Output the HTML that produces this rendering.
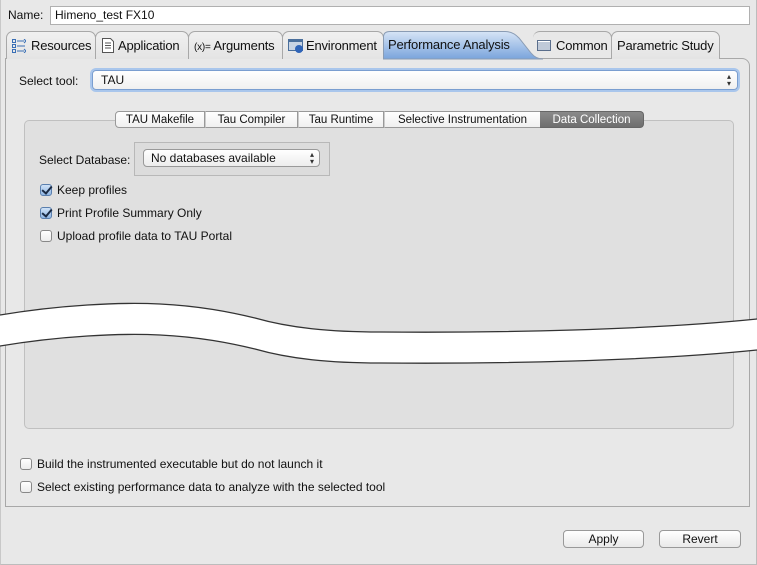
<!DOCTYPE html>
<html><head><style>
*{box-sizing:border-box;margin:0;padding:0}
body{width:757px;height:565px;background:#e8e8e8;font-family:"Liberation Sans",sans-serif;font-size:12px;color:#111;position:relative;overflow:hidden}
.a{position:absolute}
.t{position:absolute;top:31px;height:28px;border:1px solid #a8a8a8;border-bottom:none;border-radius:7px 7px 0 0;background:linear-gradient(#f0f0f0,#e4e4e4);font-size:13px;line-height:27px;padding-left:5px;white-space:nowrap;letter-spacing:-0.2px}
.cb{position:absolute;width:12px;height:12px;border:1px solid #888;border-radius:3px;background:linear-gradient(#fff,#ececec)}
.cb.on{background:linear-gradient(#cfe2f7,#8fb6e4);border-color:#5a7fae}
.cb.on:after{content:"";position:absolute;left:3px;top:-1px;width:4px;height:8px;border:solid #1a2a44;border-width:0 2px 2px 0;transform:rotate(40deg)}
.st{position:absolute;top:111px;height:17px;line-height:16px;font-size:11.5px;border:1px solid #999;border-left:none;background:linear-gradient(#fff,#f0f0f0);text-align:center}
.btn{position:absolute;top:530px;height:18px;border:1px solid #999;border-radius:4px;background:linear-gradient(#fff,#e9e9e9);text-align:center;line-height:16px;font-size:12px}
</style></head><body>
<div class="a" style="left:0;top:0;width:757px;height:565px;border:1px solid #bcbcbc;border-top:none;border-left:1px solid #c8c8c8"></div>
<div class="a" style="left:8px;top:8px;font-size:12px">Name:</div>
<div class="a" style="left:50px;top:6px;width:700px;height:19px;border:1px solid #b0b0b0;background:#fff;padding-left:4px;line-height:17px;font-size:12px">Himeno_test FX10</div>

<div class="a" style="left:5px;top:58px;width:745px;height:449px;border:1px solid #a8a8a8;border-radius:0 8px 0 0;background:#e8e8e8"></div>

<div class="t" style="left:6px;width:90px"><svg class="a" style="left:5px;top:7px" width="14" height="14"><g fill="none" stroke="#3a6fb5" stroke-width="1"><rect x="0.5" y="0.5" width="3" height="3"/><rect x="0.5" y="5.5" width="3" height="3"/><rect x="0.5" y="10.5" width="3" height="3"/><path d="M5 2h7M5 7h8M5 12h7M12 0l2 2-2 2M12 10l2 2-2 2"/></g></svg><span style="margin-left:19px">Resources</span></div>
<div class="t" style="left:95px;width:94px"><svg class="a" style="left:6px;top:6px" width="12" height="15"><path d="M0.5 0.5h8l3 3v11h-11z" fill="#fff" stroke="#555"/><path d="M3 5h6M3 7.5h6M3 10h6" stroke="#555"/></svg><span style="margin-left:17px">Application</span></div>
<div class="t" style="left:188px;width:95px"><span style="font-size:10px">(x)=</span> Arguments</div>
<div class="t" style="left:282px;width:102px"><svg class="a" style="left:5px;top:7px" width="15" height="14"><rect x="0" y="0" width="15" height="12" fill="#4a6f9c"/><rect x="1" y="3" width="13" height="8" fill="#c8d4e4"/><circle cx="11" cy="10" r="4" fill="#2f64b8"/></svg><span style="margin-left:18px">Environment</span></div>
<svg class="a" style="left:383px;top:30px" width="160" height="30"><defs><linearGradient id="g" x1="0" y1="0" x2="0" y2="1"><stop offset="0" stop-color="#d6e4f6"/><stop offset="1" stop-color="#7aa4dc"/></linearGradient></defs><path d="M0.5 29V7Q0.5 1.5 7 1.5H122Q130 1.5 136 8L148 23Q153 29 160 29Z" fill="url(#g)" stroke="#8a9cb4"/></svg>
<div class="a" style="left:388px;top:31px;font-size:13px;line-height:28px;letter-spacing:-0.2px">Performance Analysis</div>
<div class="t" style="left:533px;width:79px;border-left:none;background:transparent"><svg class="a" style="left:4px;top:8px" width="14" height="11"><rect x="0.5" y="0.5" width="13" height="10" fill="#fff" stroke="#5a6e8c"/><path d="M1 3h12M1 5h12M1 7h12M1 9h12" stroke="#7f93b0"/></svg><span style="margin-left:18px">Common</span></div>
<div class="t" style="left:611px;width:109px">Parametric Study</div>

<div class="a" style="left:19px;top:74px">Select tool:</div>
<div class="a" style="left:92px;top:70px;width:646px;height:20px;border:1px solid #7a9ed0;border-radius:4px;box-shadow:0 0 0 2px #a9c6ec;background:linear-gradient(#fff,#f0f0f0);padding-left:8px;line-height:18px">TAU<span class="a" style="right:6px;top:2px;font-size:8px;line-height:7px;color:#333">&#9652;<br>&#9662;</span></div>

<div class="a" style="left:24px;top:120px;width:710px;height:309px;border:1px solid #c0c0c0;border-radius:5px;background:#e0e0e0"></div>
<div class="st" style="left:115px;width:90px;border-left:1px solid #999;border-radius:4px 0 0 4px">TAU Makefile</div>
<div class="st" style="left:205px;width:93px;border-left:1px solid #ccc">Tau Compiler</div>
<div class="st" style="left:298px;width:86px;border-left:1px solid #ccc">Tau Runtime</div>
<div class="st" style="left:384px;width:157px;border-left:1px solid #ccc">Selective Instrumentation</div>
<div class="st" style="left:540px;width:104px;border-radius:0 4px 4px 0;background:linear-gradient(#8a8a8a,#6e6e6e);color:#fff;border-color:#666">Data Collection</div>

<div class="a" style="left:39px;top:153px">Select Database:</div>
<div class="a" style="left:134px;top:142px;width:196px;height:34px;border:1px solid #b8b8b8;background:#dcdcdc"></div>
<div class="a" style="left:143px;top:149px;width:177px;height:18px;border:1px solid #999;border-radius:4px;background:linear-gradient(#fff,#ececec);padding-left:7px;line-height:16px">No databases available<span class="a" style="right:5px;top:1px;font-size:8px;line-height:7px;color:#333">&#9652;<br>&#9662;</span></div>

<div class="cb on" style="left:40px;top:184px"></div><div class="a" style="left:57px;top:183px">Keep profiles</div>
<div class="cb on" style="left:40px;top:207px"></div><div class="a" style="left:57px;top:206px">Print Profile Summary Only</div>
<div class="cb" style="left:40px;top:230px"></div><div class="a" style="left:57px;top:229px">Upload profile data to TAU Portal</div>

<svg class="a" style="left:0;top:0" width="757" height="400"><path d="M0 315C60 305 120 302 160 304C200 306 230 312 255 318C290 328 330 332 380 332C500 333 650 330 757 319V350C650 361 500 364 380 363C330 363 290 359 255 349C230 343 200 337 160 335C120 333 60 336 0 346Z" fill="#fff"/><path d="M0 315C60 305 120 302 160 304C200 306 230 312 255 318C290 328 330 332 380 332C500 333 650 330 757 319M757 350C650 361 500 364 380 363C330 363 290 359 255 349C230 343 200 337 160 335C120 333 60 336 0 346" fill="none" stroke="#333" stroke-width="1.3"/></svg>

<div class="cb" style="left:20px;top:458px"></div><div class="a" style="left:37px;top:457px">Build the instrumented executable but do not launch it</div>
<div class="cb" style="left:20px;top:481px"></div><div class="a" style="left:37px;top:480px">Select existing performance data to analyze with the selected tool</div>

<div class="btn" style="left:563px;width:81px">Apply</div>
<div class="btn" style="left:659px;width:82px">Revert</div>
</body></html>
